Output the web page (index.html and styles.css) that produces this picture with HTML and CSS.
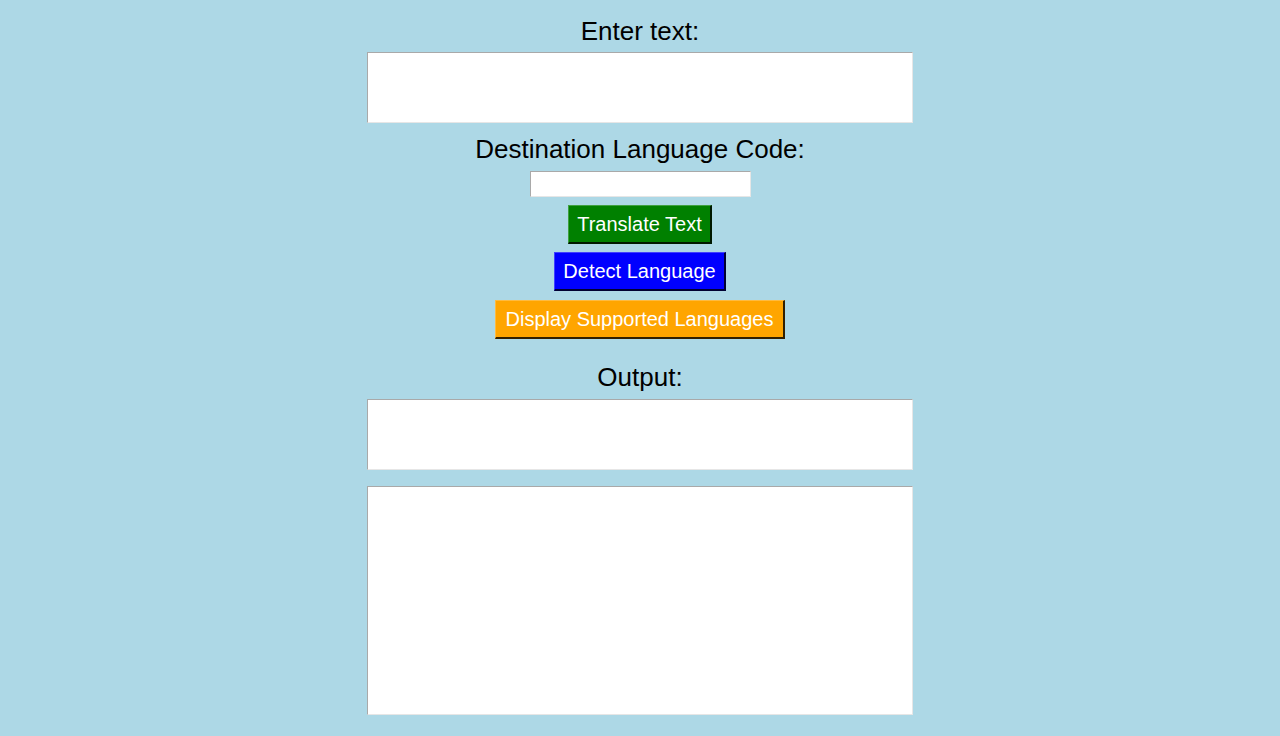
FILE: index.html
```html
<!DOCTYPE html>
<html lang="en">
<head>
<meta charset="utf-8">
<title>Translator</title>
<link rel="stylesheet" href="styles.css">
</head>
<body>
<main class="app">
  <label class="label label-first" for="src">Enter text:</label>
  <textarea id="src" class="box box-short box-src"></textarea>
  <label class="label label-dest" for="dest">Destination Language Code:</label>
  <input id="dest" class="code" type="text">
  <div class="actions">
    <button class="btn btn-green" type="button">Translate Text</button>
    <button class="btn btn-blue" type="button">Detect Language</button>
    <button class="btn btn-orange" type="button">Display Supported Languages</button>
  </div>
  <label class="label label-out" for="out">Output:</label>
  <textarea id="out" class="box box-short box-out"></textarea>
  <textarea class="box box-tall"></textarea>
</main>
</body>
</html>
```

FILE: styles.css
```css
html, body {
  margin: 0;
  padding: 0;
  background: #add8e6;
}

body {
  min-height: 736px;
  font-family: "Liberation Sans", Arial, sans-serif;
}

.app {
  display: flex;
  flex-direction: column;
  align-items: center;
  padding-top: 16px;
}

.label {
  display: block;
  font-size: 26px;
  line-height: 30px;
  color: #000;
}

.label-dest {
  margin-top: 11px;
}

.label-out {
  margin-top: 23px;
}

.box {
  box-sizing: border-box;
  width: 546px;
  margin: 0;
  padding: 2px;
  resize: none;
  background: #fff;
  border: 1px solid;
  border-color: #a9a9a9 #e6e6e6 #e6e6e6 #a9a9a9;
  font-family: "Liberation Sans", Arial, sans-serif;
  font-size: 14px;
  outline: none;
}

.box-src {
  margin-top: 6px;
}

.box-out {
  margin-top: 7px;
}

.box-short {
  height: 71px;
}

.box-tall {
  height: 229px;
  margin-top: 16px;
}

.code {
  box-sizing: border-box;
  width: 221px;
  height: 26px;
  margin-top: 7px;
  padding: 2px;
  background: #fff;
  border: 1px solid;
  border-color: #a9a9a9 #e6e6e6 #e6e6e6 #a9a9a9;
  font-family: "Liberation Sans", Arial, sans-serif;
  font-size: 14px;
  outline: none;
}

.actions {
  display: flex;
  flex-direction: column;
  align-items: center;
  gap: 8px;
  margin-top: 8px;
}

.btn {
  box-sizing: border-box;
  height: 39px;
  padding: 0 8.5px;
  font-family: "Liberation Sans", Arial, sans-serif;
  font-size: 20px;
  line-height: 22px;
  color: #fff;
  border: 1px solid;
  border-color: rgba(255, 255, 255, 0.25) rgba(0, 0, 0, 0.8) rgba(0, 0, 0, 0.8) rgba(255, 255, 255, 0.25);
  border-width: 1px 2px 2px 1px;
  cursor: pointer;
}

.btn-orange {
  margin-top: 1px;
  padding: 0 10px;
}

.btn-green {
  background: #008000;
}

.btn-blue {
  background: #0000ff;
}

.btn-orange {
  background: #ffa500;
}
```
